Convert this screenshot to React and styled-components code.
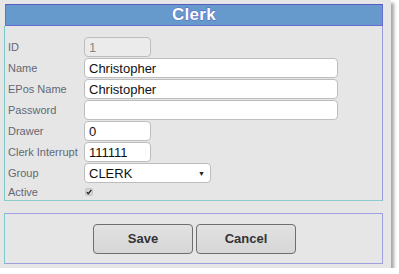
import React from 'react';
import styled, { createGlobalStyle } from 'styled-components';

const GlobalStyle = createGlobalStyle`
  body {
    margin: 0;
    background: #ffffff;
    font-family: "Liberation Sans", Arial, sans-serif;
  }
`;

const Dialog = styled.div`
  width: 391px;
  height: 268px;
  box-sizing: border-box;
  padding: 4px 8px 0 4px;
  background: #e6e6e6;
  box-shadow: 3px 3px 3px rgba(0, 0, 0, 0.35);
  display: flex;
  flex-direction: column;
`;

const Header = styled.div`
  height: 22px;
  margin-left: 1px;
  box-sizing: border-box;
  background: #6699cc;
  border: 1px solid #6a6ad0;
  border-top-color: #5a5ac0;
  display: flex;
  align-items: center;
  justify-content: center;
`;

const Title = styled.h1`
  margin: 0;
  font-size: 17px;
  font-weight: bold;
  color: #ffffff;
  -webkit-text-stroke: 0.8px #5c5cc8;
  paint-order: stroke fill;
  letter-spacing: 0.3px;
`;

const FormPanel = styled.div`
  border-left: 1px solid #7cc8c8;
  border-right: 1px solid #9a9ae0;
  border-bottom: 1px solid #8ccccc;
  padding: 11px 0 1px 3px;
  display: flex;
  flex-direction: column;
  gap: 1px;
`;

const Row = styled.div`
  display: flex;
  align-items: center;
  height: ${(p) => (p.$short ? '15px' : '20px')};
`;

const Label = styled.label`
  width: 76px;
  font-size: 11px;
  color: #636874;
`;

const TextInput = styled.input`
  box-sizing: border-box;
  width: ${(p) => p.$w}px;
  height: 20px;
  padding: 0 4px;
  border: 1px solid #bdbdbd;
  border-radius: 4px;
  background: ${(p) => (p.disabled ? '#ebebeb' : '#ffffff')};
  font-family: "Liberation Sans", Arial, sans-serif;
  font-size: 13px;
  color: ${(p) => (p.disabled ? '#888' : '#111')};
  outline: none;
`;

const Select = styled.div`
  box-sizing: border-box;
  width: 127px;
  height: 20px;
  padding: 0 4px;
  border: 1px solid #bdbdbd;
  border-radius: 4px;
  background: #ffffff;
  font-size: 13px;
  color: #111;
  display: flex;
  align-items: center;
  justify-content: space-between;
`;

const Arrow = styled.span`
  font-size: 7px;
  color: #222;
  margin-right: 1px;
`;

const Check = styled.span`
  width: 8px;
  height: 8px;
  box-sizing: border-box;
  border-radius: 2px;
  background: #d4d4d4;
  border: 1px solid #c4c4c4;
  display: flex;
  align-items: center;
  justify-content: center;
  margin-left: 1px;
`;

const ButtonPanel = styled.div`
  margin-top: 12px;
  height: 51px;
  box-sizing: border-box;
  border: 1px solid #a0a0e0;
  border-left-color: #80c8cc;
  display: flex;
  align-items: center;
  justify-content: center;
  gap: 3px;
  padding-left: 2px;
`;

const Button = styled.button`
  width: 100px;
  height: 30px;
  border: 1px solid #6e6e6e;
  border-radius: 4px;
  background: linear-gradient(#e2e2e2, #d6d6d6);
  font-family: "Liberation Sans", Arial, sans-serif;
  font-size: 13px;
  font-weight: bold;
  color: #333;
  padding: 0;
`;

const fields = [
  { label: 'ID', value: '1', w: 67, disabled: true },
  { label: 'Name', value: 'Christopher', w: 254 },
  { label: 'EPos Name', value: 'Christopher', w: 254 },
  { label: 'Password', value: '', w: 254, type: 'password' },
  { label: 'Drawer', value: '0', w: 67 },
  { label: 'Clerk Interrupt', value: '111111', w: 67 },
];

export default function App() {
  return (
    <>
      <GlobalStyle />
      <Dialog>
        <Header>
          <Title>Clerk</Title>
        </Header>
        <FormPanel>
          {fields.map((f) => (
            <Row key={f.label}>
              <Label>{f.label}</Label>
              <TextInput
                $w={f.w}
                type={f.type || 'text'}
                defaultValue={f.value}
                disabled={f.disabled}
              />
            </Row>
          ))}
          <Row>
            <Label>Group</Label>
            <Select>
              CLERK
              <Arrow>▼</Arrow>
            </Select>
          </Row>
          <Row $short>
            <Label>Active</Label>
            <Check>
              <svg width="6" height="6" viewBox="0 0 6 6">
                <path d="M0.8 3.2 L2.3 4.8 L5.3 1" stroke="#222" strokeWidth="1.3" fill="none" />
              </svg>
            </Check>
          </Row>
        </FormPanel>
        <ButtonPanel>
          <Button>Save</Button>
          <Button>Cancel</Button>
        </ButtonPanel>
      </Dialog>
    </>
  );
}
